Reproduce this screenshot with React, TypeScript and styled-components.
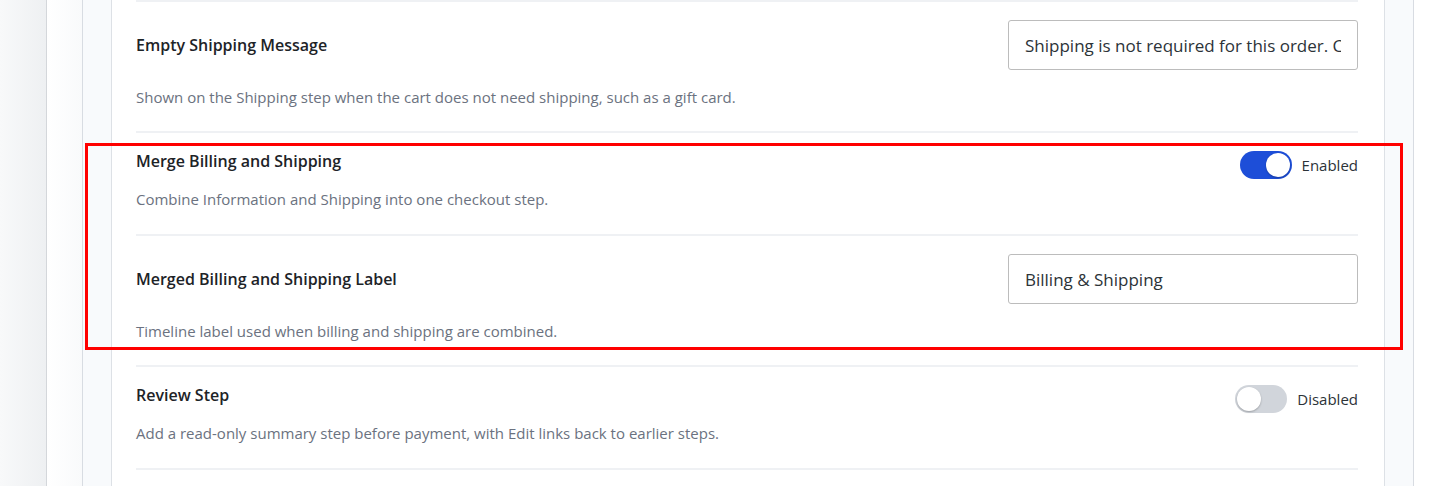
import React from "react";
import styled, { createGlobalStyle } from "styled-components";

const GlobalStyle = createGlobalStyle`
  html, body {
    margin: 0;
    padding: 0;
    background: #ffffff;
  }
  body {
    font-family: "Open Sans", "Noto Sans", "Liberation Sans", sans-serif;
    -webkit-font-smoothing: antialiased;
  }
  * {
    box-sizing: border-box;
  }
`;

type Setting =
  | { kind: "text"; title: string; hint: string; value: string }
  | { kind: "toggle"; title: string; hint: string; on: boolean };

const settings: Setting[] = [
  {
    kind: "text",
    title: "Empty Shipping Message",
    hint: "Shown on the Shipping step when the cart does not need shipping, such as a gift card.",
    value: "Shipping is not required for this order. Continue to payment.",
  },
  {
    kind: "toggle",
    title: "Merge Billing and Shipping",
    hint: "Combine Information and Shipping into one checkout step.",
    on: true,
  },
  {
    kind: "text",
    title: "Merged Billing and Shipping Label",
    hint: "Timeline label used when billing and shipping are combined.",
    value: "Billing & Shipping",
  },
  {
    kind: "toggle",
    title: "Review Step",
    hint: "Add a read-only summary step before payment, with Edit links back to earlier steps.",
    on: false,
  },
];

export default function App() {
  return (
    <>
      <GlobalStyle />
      <Page>
        <Gutter />
        <Shell>
          <Frame>
            <Card>
              {settings.map((item) => {
                const isText = item.kind === "text";
                return (
                  <Row key={item.title} $bottom={isText ? 24 : 25}>
                    <RowHead $center={isText}>
                      <Title>{item.title}</Title>
                      {item.kind === "text" ? (
                        <TextInput defaultValue={item.value} readOnly />
                      ) : (
                        <ToggleWrap>
                          <Track $on={item.on}>
                            <Knob $on={item.on} />
                          </Track>
                          <ToggleLabel>{item.on ? "Enabled" : "Disabled"}</ToggleLabel>
                        </ToggleWrap>
                      )}
                    </RowHead>
                    <Hint $gap={isText ? 17 : 10}>{item.hint}</Hint>
                  </Row>
                );
              })}
              <Row $bottom={0} />
            </Card>
          </Frame>
        </Shell>
        <Highlight />
      </Page>
    </>
  );
}

const Page = styled.div`
  position: relative;
  display: flex;
  height: 486px;
  overflow: hidden;
`;

const Gutter = styled.div`
  width: 46px;
  flex-shrink: 0;
  background: linear-gradient(to right, #f8f9fa, #eef0f2);
`;

const Shell = styled.div`
  flex: 1;
  display: flex;
  border-left: 1px solid #d4d7db;
  background: linear-gradient(to right, #ffffff 0px, #f9fafb 35px, #ffffff 36px);
  padding: 0 24px 0 35px;
`;

const Frame = styled.div`
  flex: 1;
  display: flex;
  background: #f8fafc;
  border-left: 1px solid #d8dce2;
  border-right: 1px solid #d8dce2;
  padding: 0 28px;
`;

const Card = styled.div`
  flex: 1;
  background: #ffffff;
  border-left: 1px solid #dde1e6;
  border-right: 1px solid #dde1e6;
  padding: 0 26px 0 24px;
`;

const Row = styled.div<{ $bottom: number }>`
  border-top: 2px solid #eff1f4;
  padding: 18px 0 ${(p) => p.$bottom}px;
`;

const RowHead = styled.div<{ $center: boolean }>`
  display: flex;
  align-items: ${(p) => (p.$center ? "center" : "flex-start")};
  justify-content: space-between;
  min-height: 28px;
`;

const Title = styled.div`
  font-size: 16px;
  font-weight: 600;
  color: #1d2327;
  line-height: 20px;
`;

const Hint = styled.div<{ $gap: number }>`
  margin-top: ${(p) => p.$gap}px;
  font-size: 15px;
  line-height: 20px;
  color: #6b7280;
`;

const TextInput = styled.input`
  width: 350px;
  height: 50px;
  border: 1px solid #bcbcbc;
  border-radius: 3px;
  padding: 0 16px;
  font-family: inherit;
  font-size: 17px;
  color: #2c3338;
  background: #ffffff;
  outline: none;
`;

const ToggleWrap = styled.div`
  display: flex;
  align-items: center;
  gap: 10px;
`;

const Track = styled.div<{ $on: boolean }>`
  position: relative;
  width: 52px;
  height: 28px;
  border-radius: 14px;
  background: ${(p) => (p.$on ? "#1d4ed8" : "#d1d5db")};
`;

const Knob = styled.div<{ $on: boolean }>`
  position: absolute;
  top: 2px;
  left: ${(p) => (p.$on ? "26px" : "2px")};
  width: 24px;
  height: 24px;
  border-radius: 50%;
  background: #ffffff;
  box-shadow: 0 1px 2px rgba(0, 0, 0, 0.25);
`;

const ToggleLabel = styled.span`
  font-size: 15px;
  line-height: 20px;
  color: #2c3338;
`;

const Highlight = styled.div`
  position: absolute;
  left: 85px;
  top: 143px;
  width: 1318px;
  height: 207px;
  border: 3px solid #ff0000;
  pointer-events: none;
`;
